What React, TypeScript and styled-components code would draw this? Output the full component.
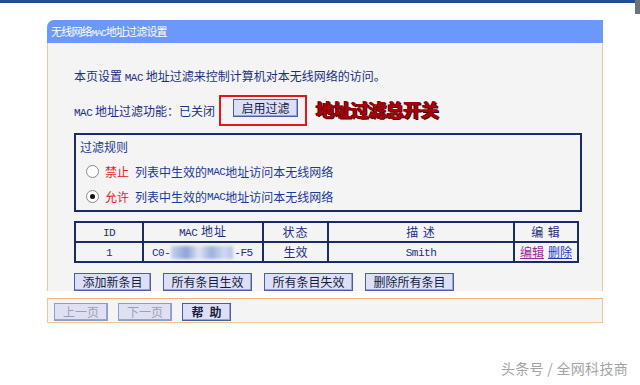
import React from "react";
import styled, { createGlobalStyle } from "styled-components";

const Global = createGlobalStyle`
  html, body { margin: 0; padding: 0; background: #ffffff; }
  body {
    font-family: "Noto Sans CJK SC", "Noto Sans", sans-serif;
    font-size: 12px;
    color: #1d2f80;
    width: 640px;
    height: 385px;
    overflow: hidden;
  }
`;

const Page = styled.div`
  position: relative;
  width: 640px;
  height: 385px;
  display: flex;
  flex-direction: column;
`;

const TopBar = styled.div`
  height: 3px;
  background: #1b4f8f;
`;

const CornerMark = styled.div`
  position: absolute;
  right: 0;
  top: 0;
  width: 5px;
  height: 14px;
  background: #6e7377;
`;

const Panel = styled.div`
  margin: 17px 0 0 47px;
  width: 556px;
  display: flex;
  flex-direction: column;
`;

const PanelHeader = styled.div`
  height: 23px;
  background: #6a98fb;
  border-top-left-radius: 7px;
  color: #ffffff;
  font-size: 11px;
  line-height: 23px;
  padding-left: 4px;
  letter-spacing: -0.8px;
`;

const HeaderMono = styled.span`
  font-family: "Liberation Mono", "DejaVu Sans Mono", monospace;
  font-size: 9px;
  letter-spacing: -0.8px;
`;

const PanelBody = styled.div`
  background: #f4f4f4;
  border-left: 1px solid #efc994;
  border-right: 1px solid #efc994;
  padding: 24px 0 0 26px;
  display: flex;
  flex-direction: column;
`;

const Mono = styled.span`
  font-family: "Liberation Mono", "DejaVu Sans Mono", monospace;
  font-size: 11px;
  letter-spacing: -0.5px;
`;

const Line = styled.div`
  height: 18px;
  line-height: 18px;
  white-space: nowrap;
`;

const SwitchRow = styled.div`
  margin-top: 11px;
  height: 29px;
  display: flex;
  align-items: center;
  white-space: nowrap;
`;

const RedBox = styled.div`
  margin-left: 4px;
  width: 72px;
  height: 25px;
  border: 2px solid #e3161c;
  display: flex;
  align-items: flex-start;
  padding: 2px 0 0 12px;
  box-sizing: content-box;
`;

const Btn = styled.button<{ $w: number; $disabled?: boolean; $bold?: boolean }>`
  width: ${(p) => p.$w}px;
  flex-shrink: 0;
  height: 18px;
  padding: 0;
  margin: 0;
  background: ${(p) => (p.$disabled ? "#dfe1f3" : "#dcdff6")};
  border: 1px solid ${(p) => (p.$disabled ? "#8f9bd0" : "#4a5ea8")};
  box-shadow: inset -1px -1px 0 #9aa3cc;
  color: ${(p) => (p.$disabled ? "#9aa0b8" : "#141c3c")};
  font-family: "Noto Sans CJK SC", sans-serif;
  font-size: 12px;
  font-weight: ${(p) => (p.$bold ? 700 : 400)};
  letter-spacing: ${(p) => (p.$bold ? "6px" : "0")};
  text-indent: ${(p) => (p.$bold ? "6px" : "0")};
  line-height: 16px;
  cursor: default;
`;

const Annotation = styled.span`
  margin-left: 9px;
  margin-top: -4px;
  font-size: 18px;
  font-weight: 900;
  color: #a8000a;
  text-shadow: 1px 1px 0 #3a0000, -1px 0 0 #6a0000;
  letter-spacing: -0.5px;
`;

const RuleBox = styled.div`
  margin-top: 8px;
  width: 500px;
  height: 75px;
  border: 2px solid #1b2a6b;
  display: flex;
  flex-direction: column;
  padding: 0 0 0 4px;
`;

const RuleTitle = styled.div`
  height: 24px;
  line-height: 24px;
  color: #1d3a9a;
`;

const RadioRow = styled.label`
  height: 25px;
  display: flex;
  align-items: center;
  color: #1d3a9a;
  white-space: nowrap;
`;

const Radio = styled.span<{ $on?: boolean }>`
  width: 11px;
  height: 11px;
  border-radius: 50%;
  border: 1px solid #8a8a8a;
  background: #ffffff;
  margin: 0 6px 0 6px;
  display: flex;
  align-items: center;
  justify-content: center;
  &::after {
    content: "";
    width: 5px;
    height: 5px;
    border-radius: 50%;
    background: ${(p) => (p.$on ? "#111111" : "transparent")};
  }
`;

const RedWord = styled.span`
  color: #e8201c;
  margin-right: 6px;
`;

const Table = styled.table`
  margin-top: 9px;
  width: 505px;
  border-collapse: collapse;
  border: 2px solid #1b2a6b;
  table-layout: fixed;
`;

const Th = styled.td<{ $w?: number }>`
  ${(p) => (p.$w ? `width: ${p.$w}px;` : "")}
  height: 17px;
  border: 2px solid #1b2a6b;
  text-align: center;
  padding: 0;
  line-height: 16px;
  color: #1d2f80;
  letter-spacing: 1px;
`;

const Td = styled.td`
  height: 17px;
  border: 2px solid #1b2a6b;
  text-align: center;
  padding: 0;
  line-height: 16px;
  color: #1d2f80;
  white-space: nowrap;
  overflow: hidden;
`;

const MacCell = styled(Td)`
  text-align: left;
  padding-left: 8px;
`;

const Blur = styled.span`
  display: inline-block;
  vertical-align: middle;
  width: 62px;
  height: 13px;
  background: linear-gradient(90deg, #c9d3ea 0%, #8da3d4 25%, #dfe5f4 45%, #9db0dc 65%, #cfd8ee 85%, #b6c4e6 100%);
  filter: blur(1.5px);
  margin: 0 1px;
`;

const EditLink = styled.a<{ $purple?: boolean }>`
  color: ${(p) => (p.$purple ? "#a0289a" : "#1d3bc8")};
  text-decoration: underline;
  margin: 0 2px;
`;

const ButtonRow = styled.div`
  margin-top: 10px;
  display: flex;
  gap: 12px;
  height: 18px;
`;

const Footer = styled.div`
  margin-top: 7px;
  border-top: 1px solid #efb877;
  border-left: 1px solid #efc994;
  border-right: 1px solid #efc994;
  border-bottom: 1px solid #efc994;
  background: #f4f4f4;
  height: 25px;
  padding: 4px 0 0 6px;
  box-sizing: border-box;
  display: flex;
  gap: 10px;
`;

const Watermark = styled.div`
  margin-top: 35px;
  align-self: flex-end;
  margin-right: 12px;
  color: #a3a3a3;
  font-size: 14px;
  letter-spacing: 0.3px;
`;

export default function App() {
  return (
    <Page>
      <Global />
      <TopBar />
      <CornerMark />
      <Panel>
        <PanelHeader>
          无线网络<HeaderMono>MAC</HeaderMono>地址过滤设置
        </PanelHeader>
        <PanelBody>
          <Line>
            本页设置 <Mono>MAC</Mono> 地址过滤来控制计算机对本无线网络的访问。
          </Line>
          <SwitchRow>
            <span>
              <Mono>MAC</Mono> 地址过滤功能：已关闭
            </span>
            <RedBox>
              <Btn $w={65}>启用过滤</Btn>
            </RedBox>
            <Annotation>地址过滤总开关</Annotation>
          </SwitchRow>
          <RuleBox>
            <RuleTitle>过滤规则</RuleTitle>
            <RadioRow>
              <Radio />
              <RedWord>禁止</RedWord>列表中生效的<Mono>MAC</Mono>地址访问本无线网络
            </RadioRow>
            <RadioRow>
              <Radio $on />
              <RedWord>允许</RedWord>列表中生效的<Mono>MAC</Mono>地址访问本无线网络
            </RadioRow>
          </RuleBox>
          <Table>
            <tbody>
              <tr>
                <Th $w={66}>
                  <Mono>ID</Mono>
                </Th>
                <Th $w={118}>
                  <Mono>MAC</Mono> 地址
                </Th>
                <Th $w={63}>状态</Th>
                <Th>描 述</Th>
                <Th $w={62}>编 辑</Th>
              </tr>
              <tr>
                <Td>
                  <Mono>1</Mono>
                </Td>
                <MacCell>
                  <Mono>C0-</Mono>
                  <Blur />
                  <Mono>-F5</Mono>
                </MacCell>
                <Td>生效</Td>
                <Td>
                  <Mono>Smith</Mono>
                </Td>
                <Td>
                  <EditLink $purple>编辑</EditLink>
                  <EditLink>删除</EditLink>
                </Td>
              </tr>
            </tbody>
          </Table>
          <ButtonRow>
            <Btn $w={77}>添加新条目</Btn>
            <Btn $w={89}>所有条目生效</Btn>
            <Btn $w={89}>所有条目失效</Btn>
            <Btn $w={89}>删除所有条目</Btn>
          </ButtonRow>
        </PanelBody>
        <Footer>
          <Btn $w={54} $disabled>
            上一页
          </Btn>
          <Btn $w={54} $disabled>
            下一页
          </Btn>
          <Btn $w={49} $bold>
            帮助
          </Btn>
        </Footer>
      </Panel>
      <Watermark>头条号 / 全网科技商</Watermark>
    </Page>
  );
}
